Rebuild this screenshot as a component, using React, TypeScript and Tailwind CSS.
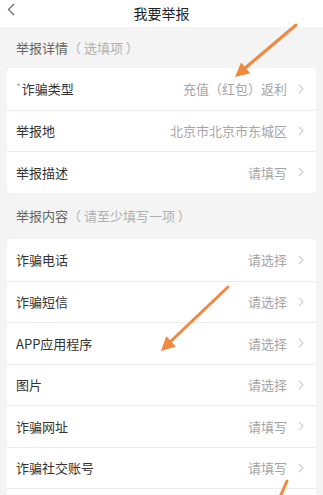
import React from "react"

const font = { fontFamily: '"Noto Sans CJK SC", "Noto Sans", sans-serif' }

type Row = { label: string; value: string; required?: boolean }

const details: Row[] = [
  { label: "诈骗类型", value: "充值（红包）返利", required: true },
  { label: "举报地", value: "北京市北京市东城区" },
  { label: "举报描述", value: "请填写" },
]

const contents: Row[] = [
  { label: "诈骗电话", value: "请选择" },
  { label: "诈骗短信", value: "请选择" },
  { label: "APP应用程序", value: "请选择" },
  { label: "图片", value: "请选择" },
  { label: "诈骗网址", value: "请填写" },
  { label: "诈骗社交账号", value: "请填写" },
]

function Chevron() {
  return (
    <svg width="6" height="10" viewBox="0 0 6 10" className="shrink-0">
      <path d="M1 1 L5 5 L1 9" fill="none" stroke="#cfcfcf" strokeWidth="1.1" />
    </svg>
  )
}

function Item({ row, first }: { row: Row; first: boolean }) {
  return (
    <div
      className={`flex items-center pl-[9px] pr-[12px] h-[41.5px] ${
        first ? "" : "border-t border-[#ededed]"
      }`}
    >
      <div className="flex items-center text-[13px] text-[#333] flex-1">
        {row.required && (
          <span className="text-[10px] leading-none text-[#aaa] mr-[1px] -mt-[3px]">*</span>
        )}
        <span>{row.label}</span>
      </div>
      <span className="text-[13px] text-[#a5a5a5] mr-[11px]">{row.value}</span>
      <Chevron />
    </div>
  )
}

export default function App() {
  return (
    <div className="relative w-[323px] h-[495px] overflow-hidden bg-[#f4f4f4]" style={font}>
      {/* header */}
      <div className="relative h-[27px] bg-white flex items-center justify-center">
        <svg width="8" height="13" viewBox="0 0 8 13" className="absolute left-[7px] top-[3px]">
          <path d="M7 1 L1.5 6.5 L7 12" fill="none" stroke="#666" strokeWidth="1.2" />
        </svg>
        <span className="text-[14px] text-[#222]">我要举报</span>
      </div>

      <div className="h-[41px] flex items-center px-4 text-[13px]">
        <span className="text-[#666]">举报详情</span>
        <span className="text-[#b0b0b0]">（ 选填项 ）</span>
      </div>
      <div className="mx-[7px] bg-white rounded-[4px]">
        {details.map((r, i) => (
          <Item key={r.label} row={r} first={i === 0} />
        ))}
      </div>

      <div className="h-[46.5px] flex items-center px-4 text-[13px]">
        <span className="text-[#666]">举报内容</span>
        <span className="text-[#b0b0b0]">（ 请至少填写一项 ）</span>
      </div>
      <div className="mx-[7px] bg-white rounded-[4px]">
        {contents.map((r, i) => (
          <Item key={r.label} row={r} first={i === 0} />
        ))}
        {/* next row, just entering the bottom edge */}
        <div className="h-[41.5px] border-t border-[#ededed]" />
      </div>

      {/* orange annotation arrows */}
      <svg className="absolute inset-0 pointer-events-none" width="323" height="495">
        <g stroke="#f0883e" strokeWidth="3" strokeLinecap="round" fill="#f0883e">
          <line x1="296" y1="25" x2="244" y2="69" />
          <polygon points="235,77 250.2,73.2 241.1,62.6" stroke="none" />
          <line x1="228" y1="287" x2="170" y2="342" />
          <polygon points="161,351 175.9,346.4 166.3,336.2" stroke="none" />
          <line x1="287" y1="481" x2="280" y2="497" />
        </g>
      </svg>
    </div>
  )
}
